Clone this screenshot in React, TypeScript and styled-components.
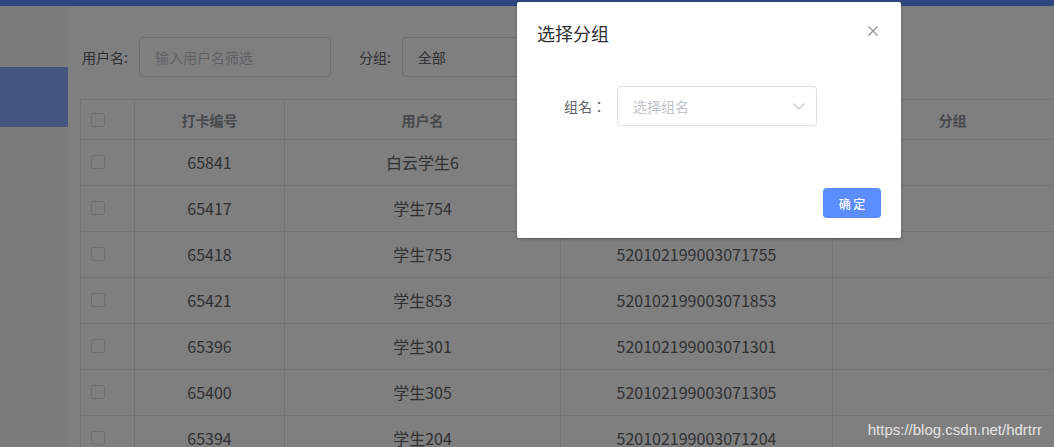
import React from "react";
import styled, { createGlobalStyle } from "styled-components";

const GlobalStyle = createGlobalStyle`
  html, body { margin: 0; padding: 0; overflow: hidden; }
  body {
    font-family: "Noto Sans CJK SC", "Microsoft YaHei", "Open Sans", sans-serif;
    color: #606266;
  }
  * { box-sizing: border-box; }
`;

const Page = styled.div`
  position: relative;
  width: 1054px;
  height: 447px;
  overflow: hidden;
  background: #ffffff;
`;

const TopBar = styled.div`
  height: 6px;
  background: #5c90ff;
`;

const Layout = styled.div`
  display: flex;
  height: 441px;
`;

const Sidebar = styled.aside`
  width: 68px;
  flex: none;
  background: #f9f9f9;
  padding-top: 61px;
`;

const NavItem = styled.div`
  height: 60px;
  background: #88aaff;
`;

const Main = styled.main`
  flex: 1;
  min-width: 0;
  overflow: hidden;
  padding: 31px 0 0 12px;
`;

const FilterBar = styled.div`
  display: flex;
  align-items: center;
  height: 40px;
  padding-left: 2px;
`;

const FilterLabel = styled.span<{ $gapLeft?: number }>`
  font-size: 14px;
  color: #606266;
  margin-left: ${(p) => p.$gapLeft ?? 0}px;
  margin-right: 11px;
`;

const InputBox = styled.div<{ $w: number }>`
  width: ${(p) => p.$w}px;
  height: 40px;
  border: 1px solid #dcdfe6;
  border-radius: 4px;
  display: flex;
  align-items: center;
  padding-left: 15px;
  font-size: 14px;
  flex: none;
`;

const Placeholder = styled.span`
  color: #c0c4cc;
`;

const Value = styled.span`
  color: #606266;
`;

const Table = styled.table`
  margin-top: 22px;
  border-collapse: collapse;
  table-layout: fixed;
  width: 992px;
  border-left: 1px solid #e4e6ea;
  border-top: 1px solid #e4e6ea;
`;

const Th = styled.th`
  height: 40px;
  padding: 0;
  font-size: 14px;
  font-weight: bold;
  color: #909399;
  text-align: center;
  border-right: 1px solid #e4e6ea;
  border-bottom: 1px solid #e4e6ea;
`;

const Td = styled.td`
  height: 46px;
  padding: 0 0 2px;
  font-size: 16px;
  color: #606266;
  text-align: center;
  border-right: 1px solid #e4e6ea;
  border-bottom: 1px solid #e4e6ea;
`;

const CheckCell = styled.div`
  display: flex;
  align-items: center;
  padding-left: 10px;
`;

const Checkbox = styled.span`
  display: inline-block;
  width: 14px;
  height: 14px;
  border: 1px solid #dcdfe6;
  border-radius: 2px;
  background: #fff;
`;

const Overlay = styled.div`
  position: absolute;
  inset: 0;
  background: rgba(0, 0, 0, 0.5);
`;

const Dialog = styled.div`
  position: absolute;
  left: 517px;
  top: 2px;
  width: 384px;
  height: 236px;
  background: #fff;
  border-radius: 2px;
  box-shadow: 0 1px 3px rgba(0, 0, 0, 0.3);
  padding: 19px 20px 20px;
  display: flex;
  flex-direction: column;
`;

const DialogTitle = styled.div`
  font-size: 18px;
  line-height: 24px;
  color: #303133;
`;

const CloseButton = styled.button`
  position: absolute;
  top: 24px;
  right: 23px;
  width: 10px;
  height: 10px;
  padding: 0;
  border: none;
  background: none;
  display: flex;
`;

const FormRow = styled.div`
  display: flex;
  align-items: center;
  margin-top: 41px;
  height: 40px;
`;

const FormLabel = styled.label`
  width: 80px;
  padding-right: 11px;
  text-align: right;
  font-family: "Noto Sans CJK TC", "Noto Sans CJK SC", sans-serif;
  font-size: 14px;
  color: #606266;
`;

const SelectBox = styled.div`
  position: relative;
  width: 200px;
  height: 40px;
  border: 1px solid #dcdfe6;
  border-radius: 4px;
  display: flex;
  align-items: center;
  padding-left: 15px;
  font-size: 14px;
`;

const Chevron = styled.svg`
  position: absolute;
  right: 11px;
  top: 16px;
`;

const Footer = styled.div`
  margin-top: auto;
  display: flex;
  justify-content: flex-end;
`;

const PrimaryButton = styled.button`
  width: 58px;
  height: 30px;
  border: none;
  border-radius: 4px;
  background: #5b8dff;
  color: #fff;
  font-family: inherit;
  font-size: 12px;
  font-weight: 500;
  padding: 0;
  white-space: pre;
`;

const Watermark = styled.div`
  position: absolute;
  right: 12px;
  bottom: 9px;
  font-family: "Liberation Sans", Arial, sans-serif;
  font-size: 15px;
  color: #e4e4e4;
`;

const rows = [
  ["65841", "白云学生6", "520102199003070006"],
  ["65417", "学生754", "520102199003071754"],
  ["65418", "学生755", "520102199003071755"],
  ["65421", "学生853", "520102199003071853"],
  ["65396", "学生301", "520102199003071301"],
  ["65400", "学生305", "520102199003071305"],
  ["65394", "学生204", "520102199003071204"],
];

export default function App() {
  return (
    <>
      <GlobalStyle />
      <Page>
        <TopBar />
        <Layout>
          <Sidebar>
            <NavItem />
          </Sidebar>
          <Main>
            <FilterBar>
              <FilterLabel>用户名:</FilterLabel>
              <InputBox $w={192}>
                <Placeholder>输入用户名筛选</Placeholder>
              </InputBox>
              <FilterLabel $gapLeft={28}>分组:</FilterLabel>
              <InputBox $w={200}>
                <Value>全部</Value>
              </InputBox>
            </FilterBar>
            <Table>
              <colgroup>
                <col style={{ width: 54 }} />
                <col style={{ width: 150 }} />
                <col style={{ width: 276 }} />
                <col style={{ width: 272 }} />
                <col style={{ width: 240 }} />
              </colgroup>
              <thead>
                <tr>
                  <Th>
                    <CheckCell>
                      <Checkbox />
                    </CheckCell>
                  </Th>
                  <Th>打卡编号</Th>
                  <Th>用户名</Th>
                  <Th>身份证号</Th>
                  <Th>分组</Th>
                </tr>
              </thead>
              <tbody>
                {rows.map((r) => (
                  <tr key={r[0]}>
                    <Td>
                      <CheckCell>
                        <Checkbox />
                      </CheckCell>
                    </Td>
                    <Td>{r[0]}</Td>
                    <Td>{r[1]}</Td>
                    <Td>{r[2]}</Td>
                    <Td />
                  </tr>
                ))}
              </tbody>
            </Table>
          </Main>
        </Layout>
        <Overlay />
        <Watermark>https://blog.csdn.net/hdrtrr</Watermark>
        <Dialog>
          <DialogTitle>选择分组</DialogTitle>
          <CloseButton aria-label="close">
            <svg width="10" height="10" viewBox="0 0 10 10">
              <path d="M0.5 0.5 L9.5 9.5 M9.5 0.5 L0.5 9.5" stroke="#909399" strokeWidth="1.2" fill="none" />
            </svg>
          </CloseButton>
          <FormRow>
            <FormLabel>组名：</FormLabel>
            <SelectBox>
              <Placeholder>选择组名</Placeholder>
              <Chevron width="12" height="7" viewBox="0 0 12 7">
                <path d="M0.5 0.5 L6 6 L11.5 0.5" stroke="#c0c4cc" strokeWidth="1.2" fill="none" />
              </Chevron>
            </SelectBox>
          </FormRow>
          <Footer>
            <PrimaryButton>确 定</PrimaryButton>
          </Footer>
        </Dialog>
      </Page>
    </>
  );
}
